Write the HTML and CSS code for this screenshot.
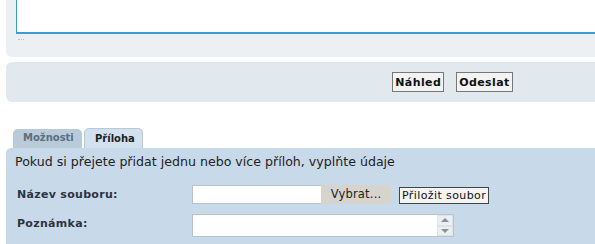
FILE: index.html
```html
<!DOCTYPE html>
<html lang="cs">
<head>
  <meta charset="UTF-8" />
  <title>Odpověď</title>
  <link rel="stylesheet" href="styles.css">
</head>
<body>
  <div class="page">
    <div class="panel msg">
      <textarea class="message"></textarea>
      <span class="grip"></span>
    </div>

    <div class="panel actions">
      <button class="btn">Náhled</button>
      <button class="btn">Odeslat</button>
    </div>

    <ul class="tabs">
      <li class="tab">Možnosti</li>
      <li class="tab active">Příloha</li>
    </ul>

    <div class="tab-body">
      <p class="intro">Pokud si přejete přidat jednu nebo více příloh, vyplňte údaje</p>
      <div class="row">
        <label>Název souboru:</label>
        <div class="file">
          <input type="text" class="file-name" />
          <span class="file-btn">Vybrat...</span>
        </div>
        <button class="btn plain">Přiložit soubor</button>
      </div>
      <div class="row">
        <label>Poznámka:</label>
        <div class="note">
          <textarea></textarea>
          <div class="scroll">
            <span class="arrow up"></span>
            <span class="arrow down"></span>
          </div>
        </div>
      </div>
    </div>
  </div>
</body>
</html>
```

FILE: styles.css
```css
* { margin:0; padding:0; box-sizing:border-box; }
body { background:#fff; font-family:"DejaVu Sans", Verdana, sans-serif; font-size:11px; color:#222; overflow:hidden; }
.page { width:900px; margin-left:6px; }

.msg { height:57px; background:#ecf0f3; padding-left:10px; position:relative; border-radius:0 0 6px 6px; }
.message { display:block; width:100%; height:34px; border:none; border-left:1px solid #3d9ccc; border-bottom:2px solid #3d9ccc; background:#fff; resize:none; outline:none; }
.grip { position:absolute; left:12px; top:36px; width:6px; height:4px; border-bottom:1px dotted #b8c4cc; }

.actions { margin-top:5px; height:40px; background:#e1e9ef; border-radius:6px; display:flex; justify-content:center; align-items:center; gap:12px; padding-right:7px; }
.btn { height:20px; padding:0 2px; border:1px solid #777; background:#f3f3f3; font-family:"DejaVu Sans", Verdana, sans-serif; font-size:11px; font-weight:bold; color:#111; letter-spacing:0.4px; }

.tabs { list-style:none; display:flex; gap:2px; margin:26px 0 0 7px; align-items:flex-end; }
.tab { height:19px; padding:0 10px; line-height:18px; font-size:10px; font-weight:bold; color:#5a6d84; background:#b9cad9; border-radius:5px 5px 0 0; }
.tab.active { height:20px; line-height:19px; color:#1b1f24; background:#d2e1ed; border:1px solid #b6c9d9; border-bottom:none; width:59px; }
.tabs .tab:first-child { width:69px; }

.tab-body { background:#c8daea; padding:6px 0 6px 9px; border-radius:5px 0 0 0; height:100px; }
.intro { font-size:12.6px; color:#222; line-height:15px; margin-bottom:16px; }
.row { display:flex; align-items:flex-start; }
.row + .row { margin-top:10px; }
.row label { width:177px; padding:3px 0 0 2px; font-weight:bold; color:#2c3440; letter-spacing:0.3px; }

.file { display:flex; height:19px; }
.file-name { width:129px; height:19px; border:1px solid #b9c3cc; border-right:none; background:#fff; outline:none; }
.file-btn { width:70px; line-height:19px; text-align:center; background:#d7d3cd; color:#222; font-size:11.5px; letter-spacing:0.2px; }
.btn.plain { margin:2px 0 0 8px; height:17px; font-weight:normal; font-size:11px; letter-spacing:0.4px; border-color:#444; padding:0 2px; background:#f4f4f4; }

.note { display:flex; width:262px; height:23px; border:1px solid #b9c3cc; background:#fff; }
.note textarea { flex:1; border:none; resize:none; outline:none; }
.scroll { width:16px; display:flex; flex-direction:column; background:#f0f0f0; }
.arrow { flex:1; display:flex; align-items:center; justify-content:center; border:1px solid #dde2e6; background:#eceff2; }
.arrow::after { content:""; border-left:4px solid transparent; border-right:4px solid transparent; }
.arrow.up::after { border-bottom:4px solid #8a9097; }
.arrow.down::after { border-top:4px solid #8a9097; }
```
